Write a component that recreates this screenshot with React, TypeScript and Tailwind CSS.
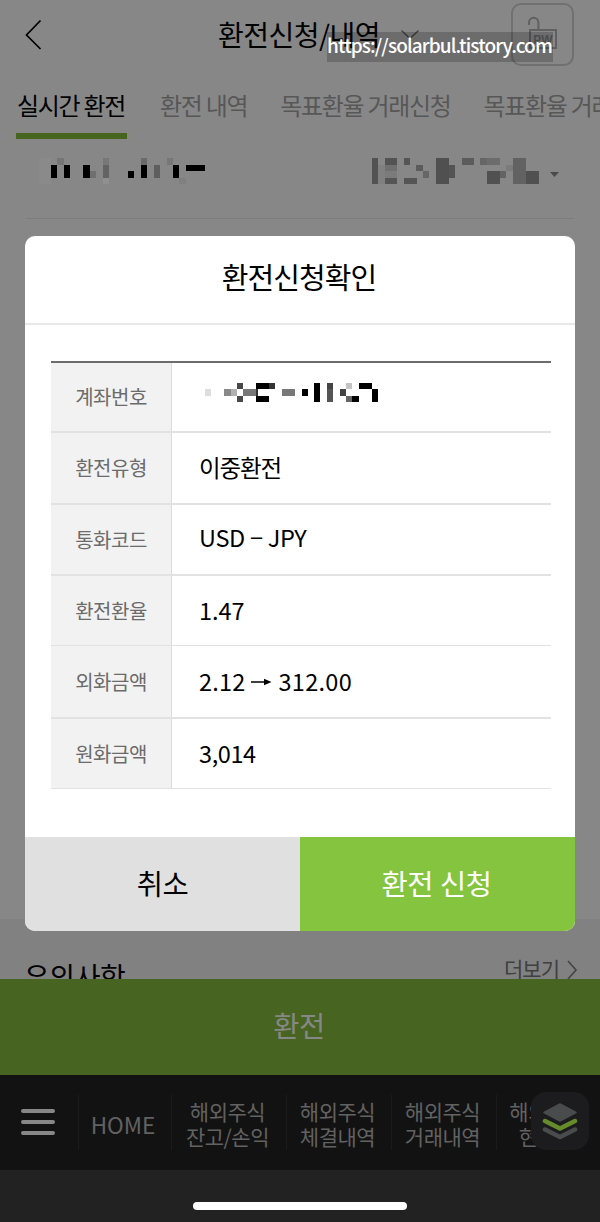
import type { ReactNode } from "react";

// ── Data ──────────────────────────────────────────────────────────────────────

const TABS = ["실시간 환전", "환전 내역", "목표환율 거래신청", "목표환율 거래내역"];

interface Row {
  label: string;
  value: ReactNode;
  className: string;
}

// x, y, width, height, fill
type Block = [number, number, number, number, string];

const ACCOUNT_BLOCKS: Block[] = [
  [0, 0, 12, 26, "#8a8a8a"],
  [12, 7, 6, 13, "#000"],
  [18, 0, 7, 7, "#757575"],
  [25, 7, 6, 13, "#000"],
  [44, 7, 7, 13, "#000"],
  [51, 13, 6, 7, "#6f6f6f"],
  [64, 0, 6, 7, "#777"],
  [64, 7, 6, 13, "#636363"],
  [64, 20, 6, 6, "#8f8f8f"],
  [89, 13, 6, 7, "#000"],
  [102, 0, 6, 7, "#6b6b6b"],
  [102, 7, 6, 13, "#000"],
  [115, 7, 6, 13, "#5e5e5e"],
  [128, 0, 6, 7, "#777"],
  [134, 7, 6, 13, "#000"],
  [140, 20, 7, 6, "#808080"],
  [147, 7, 19, 6, "#000"],
];

const BALANCE_BLOCKS: Block[] = [
  [0, 0, 6, 26, "#525252"],
  [6, 7, 7, 19, "#808080"],
  [13, 0, 12, 7, "#535353"],
  [13, 7, 12, 6, "#6f6f6f"],
  [13, 13, 12, 7, "#7b7b7b"],
  [13, 20, 12, 6, "#555"],
  [32, 0, 6, 7, "#555"],
  [32, 20, 13, 6, "#555"],
  [44, 7, 7, 6, "#5b5b5b"],
  [51, 13, 6, 7, "#666"],
  [64, 0, 13, 26, "#505050"],
  [77, 7, 6, 13, "#545454"],
  [90, 0, 12, 7, "#5c5c5c"],
  [108, 0, 7, 7, "#666"],
  [115, 0, 13, 7, "#6c6c6c"],
  [115, 13, 13, 13, "#515151"],
  [128, 13, 6, 7, "#636363"],
  [134, 7, 7, 6, "#7b7b7b"],
  [141, 0, 13, 26, "#626262"],
  [154, 13, 13, 13, "#505050"],
];

const NUMBER_BLOCKS: Block[] = [
  [0, 6, 6, 7, "#ddd"],
  [19, 6, 7, 7, "#888"],
  [26, 6, 6, 7, "#b0b0b0"],
  [32, 0, 6, 6, "#484848"],
  [32, 13, 6, 6, "#484848"],
  [38, 6, 13, 7, "#777"],
  [51, 0, 13, 6, "#000"],
  [51, 6, 2, 7, "#333"],
  [64, 0, 6, 6, "#333"],
  [51, 13, 13, 6, "#000"],
  [77, 6, 13, 7, "#777"],
  [97, 6, 6, 7, "#000"],
  [109, 0, 6, 19, "#000"],
  [122, 0, 6, 6, "#444"],
  [122, 6, 6, 13, "#555"],
  [135, 6, 6, 7, "#444"],
  [141, 0, 6, 6, "#c4c4c4"],
  [141, 13, 6, 6, "#666"],
  [147, 13, 7, 6, "#000"],
  [154, 0, 13, 6, "#000"],
  [167, 6, 6, 13, "#000"],
];

// ── Pieces ────────────────────────────────────────────────────────────────────

function Mosaic({ blocks, width, height }: { blocks: Block[]; width: number; height: number }) {
  return (
    <svg width={width} height={height} shapeRendering="crispEdges" className="block shrink-0">
      {blocks.map(([x, y, w, h, fill], i) => (
        <rect key={i} x={x} y={y} width={w} height={h} fill={fill} />
      ))}
    </svg>
  );
}

const ROWS: Row[] = [
  {
    label: "계좌번호",
    value: (
      <span className="mb-[9px] ml-1.5">
        <Mosaic blocks={NUMBER_BLOCKS} width={173} height={19} />
      </span>
    ),
    className: "h-[70px] border-b-2",
  },
  { label: "환전유형", value: <span className="tracking-[-1.1px]">이중환전</span>, className: "h-[72px] border-b-2" },
  {
    label: "통화코드",
    value: <span className="pb-[3px] tracking-[-0.3px]">USD − JPY</span>,
    className: "h-[71px] border-b-2",
  },
  { label: "환전환율", value: "1.47", className: "h-[70px] border-b" },
  {
    label: "외화금액",
    value: (
      <>
        <span className="tracking-[0.2px]">2.12</span>
        <svg width="21" height="10" viewBox="0 0 21 10" className="mt-px mr-[6px] ml-[6px]">
          <path d="M0 5h15" stroke="#000" strokeWidth="1.5" />
          <path d="M13 1.8 20.5 5 13 8.2z" />
        </svg>
        <span className="tracking-[0.3px]">312.00</span>
      </>
    ),
    className: "h-[73px] border-b-2",
  },
  { label: "원화금액", value: <span className="tracking-[-0.4px]">3,014</span>, className: "h-[70px] border-b" },
];

function NavItem({ className, children }: { className: string; children: ReactNode }) {
  return (
    <div
      className={`flex h-[55px] shrink-0 items-center justify-center border-l border-[#1b1b1b] text-center leading-[25px] whitespace-nowrap text-[#626262] ${className}`}
    >
      {children}
    </div>
  );
}

function ConfirmDialog() {
  return (
    <div className="absolute top-[236px] left-[25px] flex h-[695px] w-[550px] flex-col overflow-hidden rounded-[10px] bg-white text-black">
      <h2 className="flex h-[89px] shrink-0 items-center justify-center border-b-2 border-[#e8e8e8] pr-0.5 pb-[6px] text-[29px] tracking-[-0.9px]">
        환전신청확인
      </h2>

      <div className="mx-[26px] mt-9 w-[500px] border-t-2 border-[#6c6c6c]">
        {ROWS.map((row) => (
          <div key={row.label} className={`flex border-[#e2e2e2] ${row.className}`}>
            <div className="flex w-[121px] items-center justify-center border-r border-[#dcdcdc] bg-[#f2f2f2] text-[20px] tracking-[-0.5px] text-[#6b6b6b]">
              {row.label}
            </div>
            <div className="flex items-center pl-[27px] text-[23.5px]">{row.value}</div>
          </div>
        ))}
      </div>

      <div className="mt-auto grid h-[94px] shrink-0 grid-cols-2 text-[28.5px] tracking-[-0.5px]">
        <button type="button" className="bg-[#e0e0e0] pb-0.5">
          취소
        </button>
        <button type="button" className="bg-[#85c43e] pr-0.5 pb-0.5 text-white [word-spacing:1px]">
          환전 신청
        </button>
      </div>
    </div>
  );
}

// ── Page ──────────────────────────────────────────────────────────────────────

export default function App() {
  return (
    <div className="relative flex h-[1222px] w-[600px] flex-col overflow-hidden bg-[#878787] font-['Noto_Sans_CJK_KR',sans-serif] text-black">
      {/* Header */}
      <header className="flex h-[70px] shrink-0 items-center pb-px">
        <svg width="18" height="32" viewBox="0 0 18 32" fill="none" stroke="#000" strokeWidth="1.7" className="ml-6">
          <path d="M16.5 1.5 2.5 16l14 14" />
        </svg>
        <h1 className="ml-[176px] w-[165px] pb-px text-[28px] leading-10 tracking-[-0.5px] whitespace-nowrap">
          환전신청/내역
        </h1>
        <svg width="20" height="12" viewBox="0 0 20 12" fill="none" stroke="#444" strokeWidth="1.5" className="ml-[17px]">
          <path d="M1.5 1.5 10 9.5l8.5-8" />
        </svg>
        <div className="ml-[91px] h-[63px] w-[63px] rounded-[10px] border-2 border-[#707070]">
          <svg width="59" height="59" viewBox="0 0 59 59" fill="none" stroke="#606060" strokeWidth="2">
            <path d="M16 20v-2.500a4.700 4.700 0 0 1 9.400 0V25" />
            <path d="M17 25h26v18H17z" />
            <text x="30" y="38.500" textAnchor="middle" fontSize="12" fontWeight="700" fill="#606060" stroke="none" fontFamily="Liberation Sans">
              PW
            </text>
          </svg>
        </div>
      </header>

      {/* Tabs */}
      <nav className="flex h-[69px] shrink-0 gap-[33px] pl-[17px] text-[24px] leading-[70px] tracking-[-1.3px] whitespace-nowrap text-[#575757]">
        {TABS.map((tab, i) => (
          <div
            key={tab}
            className={i === 0 ? "-ml-px w-[111px] shrink-0 border-b-[6px] border-[#486520] pl-px text-black" : "shrink-0"}
          >
            {tab}
          </div>
        ))}
      </nav>

      {/* Account */}
      <section className="flex h-[79px] shrink-0 items-start pt-[19px] pl-[39px]">
        <Mosaic blocks={ACCOUNT_BLOCKS} width={166} height={26} />
        <div className="ml-[167px] flex items-center">
          <Mosaic blocks={BALANCE_BLOCKS} width={167} height={26} />
          <svg width="9" height="5" viewBox="0 0 9 5" className="mt-1.5 ml-[11px]">
            <path d="M0 0h9L4.500 5z" fill="#4a4a4a" />
          </svg>
        </div>
      </section>
      <div className="mx-[26px] h-px shrink-0 bg-[#7d7d7d]" />

      {/* Notice */}
      <section className="mt-auto flex h-[60px] shrink-0 justify-between overflow-hidden bg-[#818181] pr-[22px] pl-6">
        <h3 className="mt-[37px] text-[28px] leading-10 tracking-[-0.4px]">유의사항</h3>
        <span className="mt-[34px] flex items-start text-[21px] leading-[30px] tracking-[-1px] text-[#404040]">
          더보기
          <svg width="12" height="20" viewBox="0 0 12 20" fill="none" stroke="#444" strokeWidth="1.6" className="mt-[7px] ml-[7px]">
            <path d="m2 1 8 9-8 9" />
          </svg>
        </span>
      </section>
      <button
        type="button"
        className="h-24 shrink-0 bg-[#476420] pr-0.5 pb-1 text-[28.5px] tracking-[-0.5px] text-[#878787]"
      >
        환전
      </button>

      {/* Bottom menu */}
      <nav className="flex h-[95px] shrink-0 items-center bg-[#121212] pb-px pl-[21px]">
        <div className="mr-[23px] flex w-[34px] shrink-0 flex-col gap-[7px]">
          <span className="h-1 rounded-full bg-[#878787]" />
          <span className="h-1 rounded-full bg-[#878787]" />
          <span className="h-1 rounded-full bg-[#878787]" />
        </div>
        <NavItem className="w-[93px] pt-1 pr-1 text-[22.5px]">HOME</NavItem>
        <NavItem className="w-[115px] pt-[3px] pr-[3px] text-[21px] tracking-[-0.5px]">
          해외주식
          <br />
          잔고/손익
        </NavItem>
        <NavItem className="w-[105px] pt-[3px] pr-[3px] text-[21px] tracking-[-0.5px]">
          해외주식
          <br />
          체결내역
        </NavItem>
        <NavItem className="w-[105px] pt-[3px] pr-[3px] text-[21px] tracking-[-0.5px]">
          해외주식
          <br />
          거래내역
        </NavItem>
        <NavItem className="w-[104px] pt-[3px] pr-[3px] text-[21px] tracking-[-0.5px]">
          해외주식
          <br />
          현재가
        </NavItem>
      </nav>
      <div className="flex h-[52px] shrink-0 justify-center bg-[#222] pt-8">
        <div className="h-2 w-[214px] rounded-full bg-white" />
      </div>

      {/* Floating layers button */}
      <div className="absolute top-[1092px] left-[531px] flex h-[58px] w-[58px] items-center justify-center rounded-[15px] bg-[#1c1c1e]">
        <svg width="36" height="38" viewBox="0 0 36 38" strokeLinejoin="round">
          <path d="m3 27.500 15 7.500 15-7.500" fill="none" stroke="#4a4b4d" strokeWidth="4.500" strokeLinecap="round" />
          <path d="m3 19 15 7.500L33 19" fill="none" stroke="#1c1c1e" strokeWidth="7.500" strokeLinecap="round" />
          <path d="m3 19 15 7.500L33 19" fill="none" stroke="#658b2b" strokeWidth="4.500" strokeLinecap="round" />
          <path d="M18 2 34 10.500 18 19 2 10.500z" fill="#4a4b4d" stroke="#4a4b4d" strokeWidth="1.500" />
        </svg>
      </div>

      <ConfirmDialog />

      {/* Address label */}
      <div className="absolute top-8 left-[327px] h-[30px] w-[226px] bg-black/20 text-[19px] leading-[25px] font-medium tracking-[-0.88px] whitespace-nowrap text-white">
        https://solarbul.tistory.com
      </div>
    </div>
  );
}
